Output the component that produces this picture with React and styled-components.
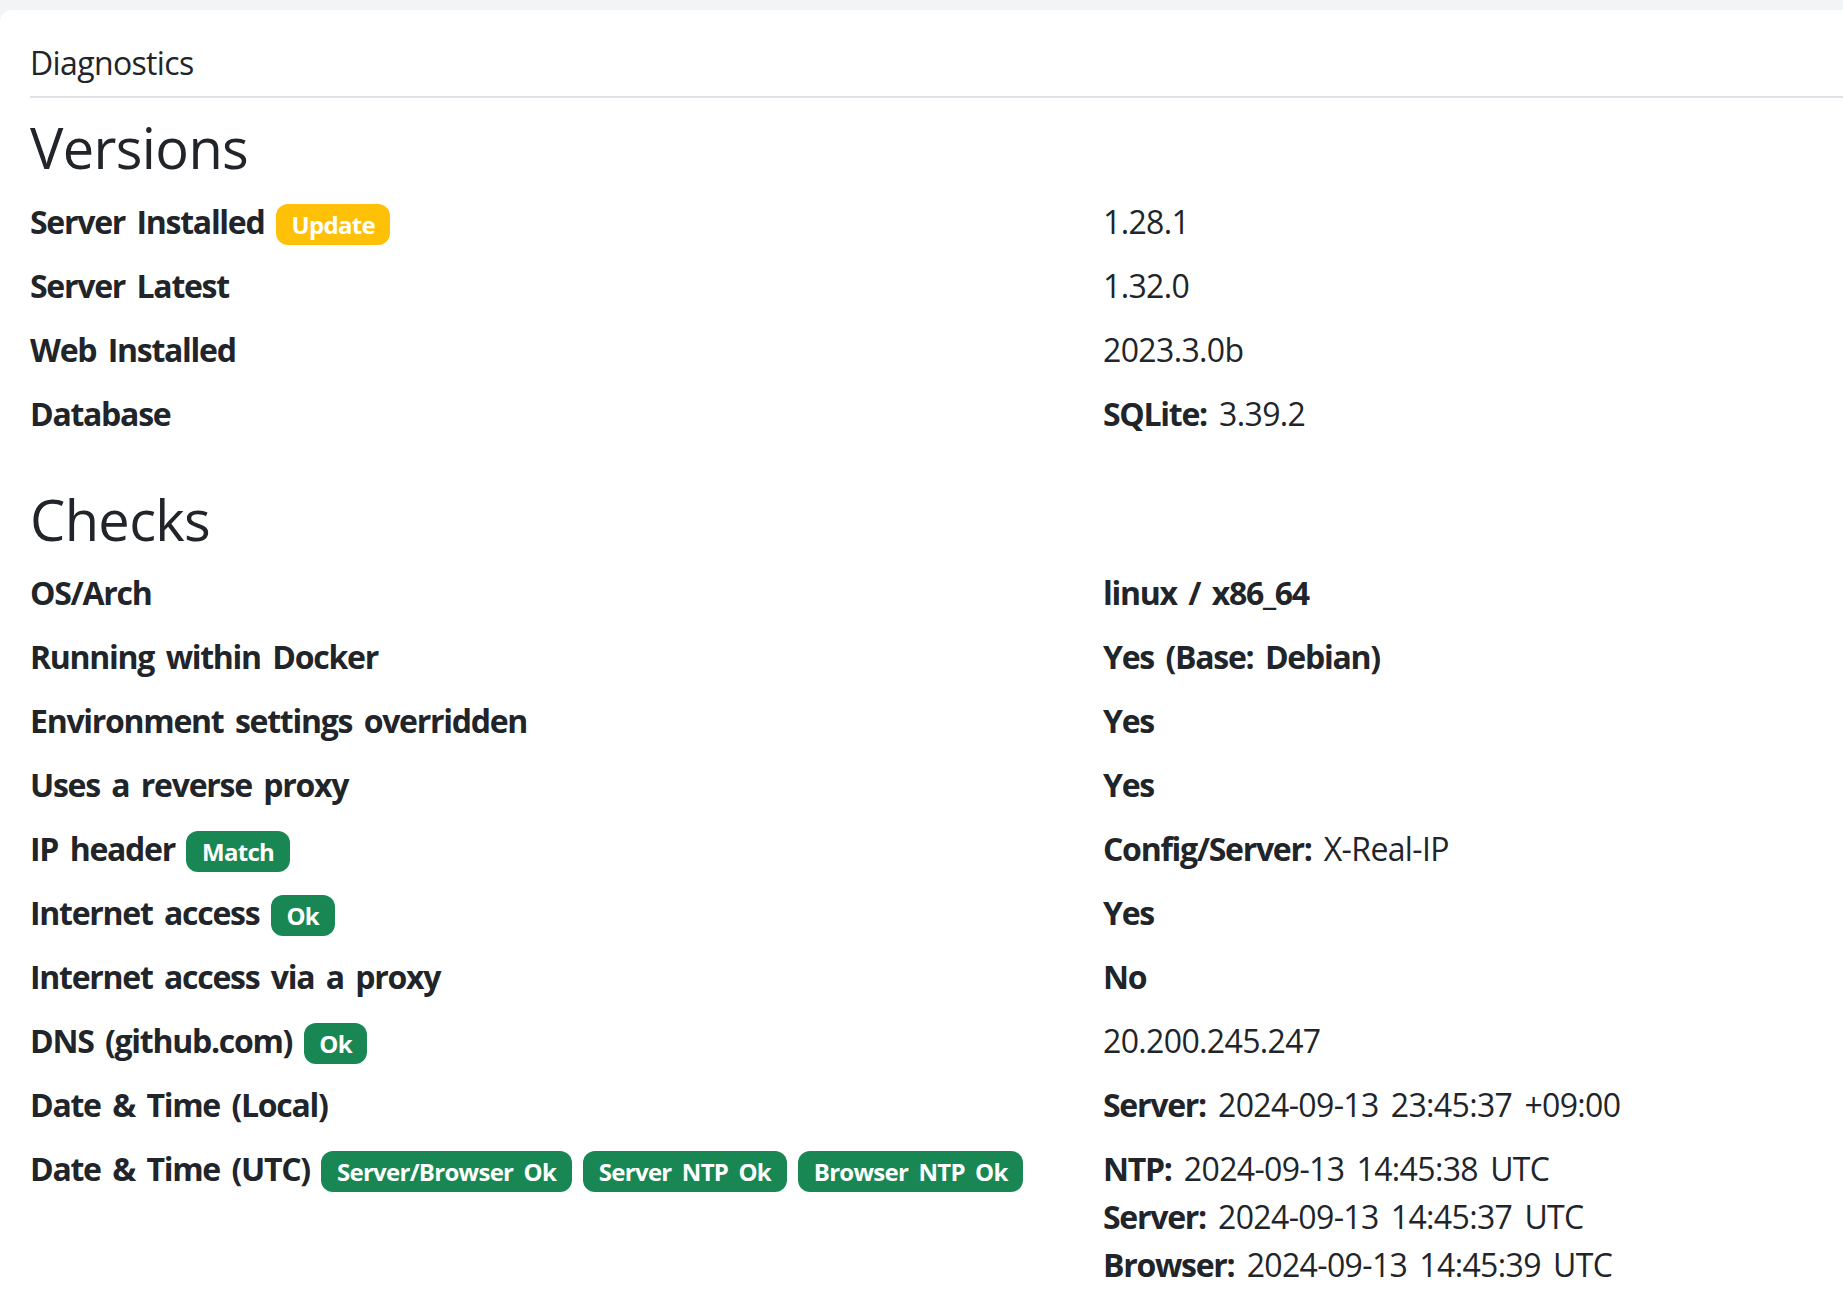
import React from 'react';
import styled, { createGlobalStyle } from 'styled-components';

const Global = createGlobalStyle`
  html, body { margin: 0; padding: 0; background: #f3f4f6; overflow: hidden; }
  body {
    font-family: "Open Sans", "Noto Sans CJK KR", sans-serif;
    font-size: 32px;
    line-height: 1.5;
    color: #212529;
    letter-spacing: -0.02em;
    word-spacing: 0.14em;
  }
  b, strong { letter-spacing: -0.04em; }
`;

const Page = styled.main`
  padding-top: 10px;
`;

const Card = styled.section`
  background: #fff;
  border-radius: 12px 0 0 0;
  padding: 34px 0 32px 30px;
  min-height: 1400px;
`;

const BlockTitle = styled.h6`
  margin: 0 0 16px;
  padding-bottom: 14px;
  border-bottom: 2px solid #dee2e6;
  font-size: 32px;
  font-weight: 400;
  line-height: 1.2;
`;

const SectionTitle = styled.h3`
  margin: 3px 0 16px;
  font-size: 56px;
  font-weight: 400;
  line-height: 1.2;
`;

const List = styled.dl`
  display: grid;
  grid-template-columns: 1073px 1fr;
  margin: 0 0 32px;
`;

const Term = styled.dt`
  margin: 0;
  font-weight: 700;
  letter-spacing: -0.04em;
  white-space: nowrap;
`;

const Value = styled.dd`
  margin: 0 0 16px;
  font-weight: ${(p) => (p.$bold ? 700 : 400)};
  letter-spacing: ${(p) => (p.$bold ? '-0.04em' : '-0.02em')};
`;

const Line = styled.span`
  display: block;
`;

const Key = styled.b`
  font-weight: 700;
`;

const Badge = styled.span`
  display: inline-block;
  padding: 0.35em 0.65em;
  font-size: 0.75em;
  font-weight: 700;
  line-height: 1;
  color: #fff;
  text-align: center;
  white-space: nowrap;
  vertical-align: baseline;
  letter-spacing: -0.03em;
  word-spacing: 0.2em;
  border-radius: 12px;
  background: ${(p) => (p.$tone === 'warning' ? '#ffc107' : '#198754')};
`;

const versions = [
  { label: 'Server Installed', badges: [{ text: 'Update', tone: 'warning' }], value: '1.28.1' },
  { label: 'Server Latest', value: '1.32.0' },
  { label: 'Web Installed', value: '2023.3.0b' },
  { label: 'Database', value: [{ k: 'SQLite:', v: '3.39.2' }] },
];

const checks = [
  { label: 'OS/Arch', value: 'linux / x86_64', bold: true },
  { label: 'Running within Docker', value: 'Yes (Base: Debian)', bold: true },
  { label: 'Environment settings overridden', value: 'Yes', bold: true },
  { label: 'Uses a reverse proxy', value: 'Yes', bold: true },
  { label: 'IP header', badges: [{ text: 'Match' }], value: [{ k: 'Config/Server:', v: 'X-Real-IP' }] },
  { label: 'Internet access', badges: [{ text: 'Ok' }], value: 'Yes', bold: true },
  { label: 'Internet access via a proxy', value: 'No', bold: true },
  { label: 'DNS (github.com)', badges: [{ text: 'Ok' }], value: '20.200.245.247' },
  { label: 'Date & Time (Local)', value: [{ k: 'Server:', v: '2024-09-13 23:45:37 +09:00' }] },
  {
    label: 'Date & Time (UTC)',
    badges: [{ text: 'Server/Browser Ok' }, { text: 'Server NTP Ok' }, { text: 'Browser NTP Ok' }],
    value: [
      { k: 'NTP:', v: '2024-09-13 14:45:38 UTC' },
      { k: 'Server:', v: '2024-09-13 14:45:37 UTC' },
      { k: 'Browser:', v: '2024-09-13 14:45:39 UTC' },
    ],
  },
];

function Rows({ items }) {
  return (
    <List>
      {items.map((it) => (
        <React.Fragment key={it.label}>
          <Term>
            {it.label}
            {(it.badges || []).map((b) => (
              <React.Fragment key={b.text}>
                {' '}
                <Badge $tone={b.tone}>{b.text}</Badge>
              </React.Fragment>
            ))}
          </Term>
          <Value $bold={it.bold}>
            {Array.isArray(it.value)
              ? it.value.map((l) => (
                  <Line key={l.k}>
                    <Key>{l.k}</Key> {l.v}
                  </Line>
                ))
              : it.value}
          </Value>
        </React.Fragment>
      ))}
    </List>
  );
}

export default function App() {
  return (
    <>
      <Global />
      <Page>
        <Card>
          <BlockTitle>Diagnostics</BlockTitle>
          <SectionTitle>Versions</SectionTitle>
          <Rows items={versions} />
          <SectionTitle>Checks</SectionTitle>
          <Rows items={checks} />
        </Card>
      </Page>
    </>
  );
}
